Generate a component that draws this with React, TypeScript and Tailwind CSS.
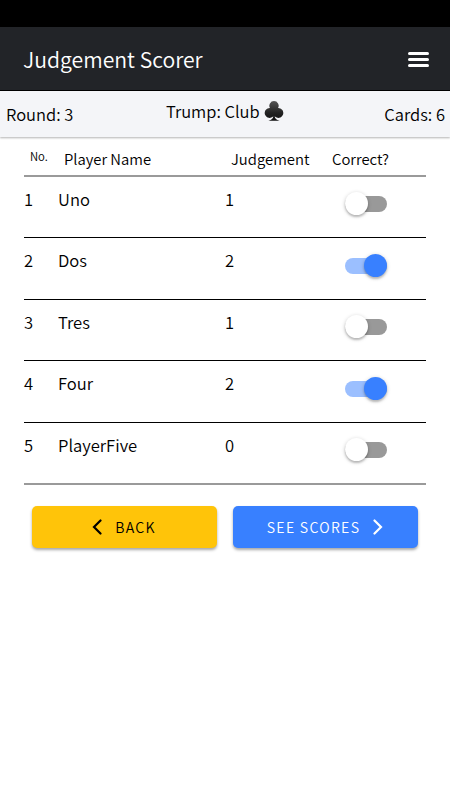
type Player = {
  name: string;
  judgement: number;
  correct: boolean;
  row: string;
};

const players: Player[] = [
  { name: "Uno", judgement: 1, correct: false, row: "h-[61px] border-b border-black" },
  { name: "Dos", judgement: 2, correct: true, row: "h-[62px] border-b border-black" },
  { name: "Tres", judgement: 1, correct: false, row: "h-[61px] border-b border-black" },
  { name: "Four", judgement: 2, correct: true, row: "h-[62px] border-b border-black" },
  { name: "PlayerFive", judgement: 0, correct: false, row: "h-[62px] border-b-2 border-[#9a9a9a]" },
];

function Toggle({ on }: { on: boolean }) {
  return (
    <button
      role="switch"
      aria-checked={on}
      className={`relative ml-[5px] block h-4 w-[42px] rounded-full ${on ? "mt-5 bg-[#9bbfff]" : "mt-[19px] bg-[#999999]"}`}
    >
      <span
        className={`absolute -top-1 size-[23px] rounded-full shadow-[0_2px_2px_rgba(0,0,0,0.18),0_1px_4px_rgba(0,0,0,0.2)] ${
          on ? "right-0 bg-[#3880ff]" : "left-0 bg-white"
        }`}
      />
    </button>
  );
}

function ClubIcon() {
  return (
    <svg viewBox="0 0 20 20" className="ml-1 size-5">
      <defs>
        <linearGradient id="club" x1="0" y1="0" x2="0" y2="1">
          <stop offset="0" stopColor="#555" />
          <stop offset="0.6" stopColor="#222" />
          <stop offset="1" stopColor="#111" />
        </linearGradient>
      </defs>
      <path
        fill="url(#club)"
        d="M10 0a4.700 4.700 0 0 1 4 7.100a4.900 4.900 0 1 1-3.300 8.100c.2 2 1.600 3.500 4.900 4.600H4.400c3.300-1.100 4.700-2.600 4.900-4.600A4.900 4.900 0 1 1 6 7.100A4.700 4.700 0 0 1 10 0z"
      />
    </svg>
  );
}

export default function App() {
  return (
    <div className="h-[800px] w-[450px] overflow-hidden bg-white font-['Noto_Sans_CJK_SC',sans-serif] font-[350] text-black">
      <div className="h-[27px] bg-black" />
      <header className="flex h-16 items-center justify-between border-b border-black bg-[#222428] pr-[21px] pl-[23px]">
        <h1 className="text-[21.2px] leading-8 font-[350] text-white">Judgement Scorer</h1>
        <button aria-label="Menu" className="mt-[2px] flex flex-col gap-[3px]">
          <span className="h-[3px] w-[21px] rounded-full bg-white" />
          <span className="h-[3px] w-[21px] rounded-full bg-white" />
          <span className="h-[3px] w-[21px] rounded-full bg-white" />
        </button>
      </header>

      <div className="flex h-[46px] items-start justify-between bg-[#f4f5f8] pr-[5px] pl-[6px] text-[16.5px] leading-6 shadow-[0_1px_2px_rgba(0,0,0,0.3)]">
        <span className="mt-[11px]">Round: 3</span>
        <span className="mt-2 mr-[8px] flex items-center">
          Trump: Club
          <ClubIcon />
        </span>
        <span className="mt-[11px]">Cards: 6</span>
      </div>

      <main className="px-6">
        <div className="grid h-10 grid-cols-[34px_168px_114px_86px] border-b-2 border-[#9a9a9a] text-[14.85px] leading-6">
          <span className="mt-[7px] pl-[6px] text-[11.3px] leading-6">No.</span>
          <span className="mt-[10px] pl-[6px]">Player Name</span>
          <span className="mt-[10px] pl-[5px]">Judgement</span>
          <span className="mt-[10px] -ml-[8px]">Correct?</span>
        </div>
        {players.map((p, i) => (
          <div key={p.name} className={`grid grid-cols-[34px_168px_90px_110px] text-[16.6px] leading-6 ${p.row}`}>
            <span className="mt-[10px]">{i + 1}</span>
            <span className="mt-[10px]">{p.name}</span>
            <span className="mt-[10px] -ml-px">{p.judgement}</span>
            <div className="pl-6">
              <Toggle on={p.correct} />
            </div>
          </div>
        ))}

        <div className="mt-[21px] flex gap-4 px-2">
          <button className="flex h-[42px] w-[185px] items-center justify-center rounded-[5px] bg-[#ffc409] pr-px text-[14.1px] tracking-[1.3px] shadow-[0_2px_3px_rgba(0,0,0,0.35)]">
            <svg viewBox="0 0 10 16" className="mr-[13px] h-4 w-[10px]" fill="none" stroke="black" strokeWidth="2.2" strokeLinecap="round">
              <path d="M8.500 1.500L2 8l6.500 6.500" />
            </svg>
            <span className="pt-px">BACK</span>
          </button>
          <button className="flex h-[42px] w-[185px] items-center justify-center rounded-[5px] bg-[#3880ff] text-[14.1px] tracking-[1.3px] text-white shadow-[0_2px_3px_rgba(0,0,0,0.35)]">
            <span className="pt-px">SEE SCORES</span>
            <svg viewBox="0 0 10 16" className="mr-px ml-[13px] h-4 w-[10px]" fill="none" stroke="white" strokeWidth="2.2" strokeLinecap="round">
              <path d="M1.500 1.500L8 8l-6.500 6.500" />
            </svg>
          </button>
        </div>
      </main>
    </div>
  );
}
